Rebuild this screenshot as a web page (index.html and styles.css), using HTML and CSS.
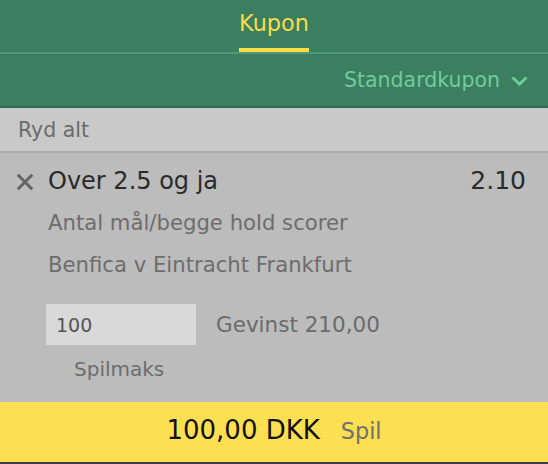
FILE: index.html
```html
<!DOCTYPE html>
<html lang="da">
<head>
<meta charset="utf-8">
<title>Kupon</title>
<link rel="stylesheet" href="styles.css">
</head>
<body>
<div class="app">
  <nav class="tabs">
    <span class="tab">Kupon</span>
  </nav>
  <div class="mode">
    <span class="mode-label">Standardkupon</span>
    <svg class="chev" width="17" height="10" viewBox="0 0 17 10"><path d="M1.5 1.5 L8.5 8 L15.5 1.5" fill="none" stroke="#6fcc9e" stroke-width="3"/></svg>
  </div>
  <div class="clear">Ryd alt</div>
  <section class="bet">
    <div class="bet-head">
      <span class="remove"><svg width="18" height="18" viewBox="0 0 18 18"><path d="M1.8 1.8 L16.2 16.2 M16.2 1.8 L1.8 16.2" stroke="#646464" stroke-width="3"/></svg></span>
      <span class="title">Over 2.5 og ja</span>
      <span class="odds">2.10</span>
    </div>
    <div class="body">
      <div class="line">Antal mål/begge hold scorer</div>
      <div class="line">Benfica v Eintracht Frankfurt</div>
      <div class="stake-row">
        <div class="stake">100</div>
        <div class="win">Gevinst 210,00</div>
      </div>
      <div class="max">Spilmaks</div>
    </div>
  </section>
  <footer class="place">
    <span class="amount">100,00 DKK</span>
    <span class="play">Spil</span>
  </footer>
</div>
</body>
</html>
```
FILE: styles.css
```css
* { box-sizing: border-box; }
html, body { margin: 0; padding: 0; }
body {
  width: 548px;
  height: 464px;
  font-family: "DejaVu Sans", "Liberation Sans", sans-serif;
  overflow: hidden;
}
.app {
  display: flex;
  flex-direction: column;
  height: 464px;
}
.tabs {
  height: 54px;
  background: #3c7f60;
  border-bottom: 2px solid #4c9b77;
  display: flex;
  justify-content: center;
}
.tab {
  font-size: 22.4px;
  line-height: 26px;
  padding-top: 10px;
  padding-bottom: 12px;
  color: #f9dc48;
  border-bottom: 4px solid #fcdc44;
  height: 52px;
}
.mode {
  height: 54px;
  background: #3c7f60;
  border-bottom: 2px solid #2f6a4f;
  display: flex;
  justify-content: flex-end;
  align-items: center;
  padding-right: 20px;
  gap: 11px;
}
.mode-label {
  font-size: 20.5px;
  line-height: 26px;
  color: #6fcc9e;
}
.chev { margin-top: 2px; }
.clear {
  height: 45px;
  background: #c9c9c9;
  border-bottom: 2px solid #acacac;
  display: flex;
  align-items: center;
  padding-left: 18px;
  font-size: 20.5px;
  color: #6b6b6b;
}
.bet {
  flex: 1;
  background: #bcbcbc;
  padding: 7px 22px 0 0;
}
.bet-head {
  display: flex;
  align-items: center;
  height: 42px;
}
.remove {
  width: 48px;
  padding-left: 16px;
  display: flex;
  margin-top: 2px;
}
.title {
  flex: 1;
  font-size: 24px;
  line-height: 42px;
  color: #2a2a2a;
}
.odds {
  font-size: 25px;
  line-height: 42px;
  color: #2a2a2a;
}
.body { padding-left: 48px; }
.line {
  font-size: 21.2px;
  line-height: 42px;
  color: #6d6d6d;
}
.stake-row {
  display: flex;
  align-items: baseline;
  margin-top: 18px;
  margin-left: -2px;
}
.stake {
  width: 150px;
  height: 41px;
  background: #d9d9d9;
  padding: 2px 0 0 10px;
  font-size: 19px;
  line-height: 39px;
  color: #555;
}
.win {
  margin-left: 20px;
  font-size: 21.5px;
  color: #6b6b6b;
}
.max {
  margin-top: 4px;
  margin-left: 26px;
  font-size: 20px;
  line-height: 40px;
  color: #6d6d6d;
}
.place {
  height: 62px;
  background: #fddf52;
  border-bottom: 2px solid #3a3f45;
  display: flex;
  justify-content: center;
  align-items: baseline;
  gap: 21px;
  padding-top: 8px;
}
.amount {
  font-size: 26px;
  line-height: 40px;
  color: #111;
}
.play {
  font-size: 22.3px;
  color: #6f6f6f;
}
```
